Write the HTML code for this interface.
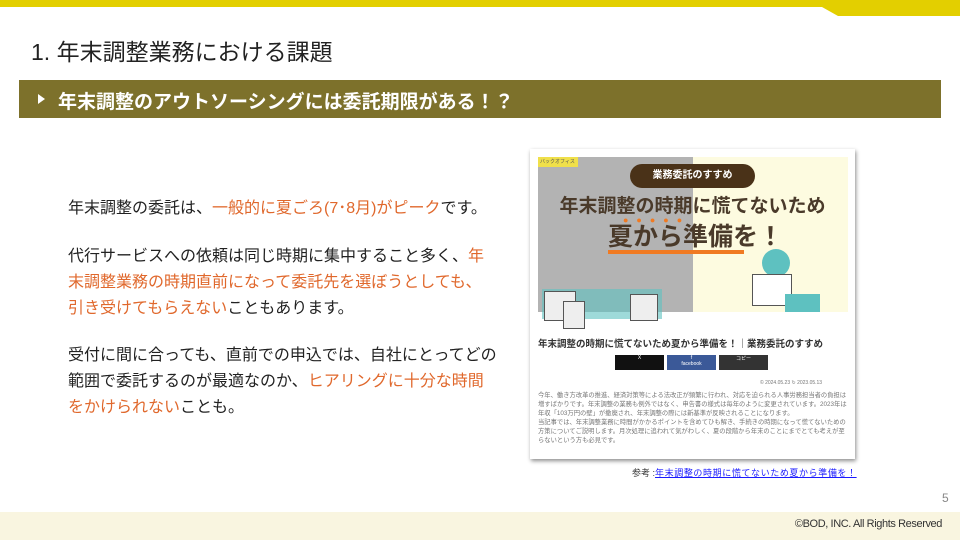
<!DOCTYPE html>
<html><head><meta charset="utf-8"><style>
*{margin:0;padding:0;box-sizing:border-box}
body{width:960px;height:540px;position:relative;background:#fff;font-family:"Liberation Sans","Noto Sans CJK JP",sans-serif;overflow:hidden;color:#222}
.abs{position:absolute}
.o{color:#e0682c}
.p{position:absolute;left:68px;font-size:16px;line-height:26px;white-space:nowrap}
</style></head><body>
<svg class="abs" style="left:0;top:0" width="960" height="17"><polygon points="0,0 960,0 960,16 838,16 822,7 0,7" fill="#e3cf00"/></svg>
<div class="abs" style="left:31px;top:33px;font-size:23px;color:#222">1. 年末調整業務における課題</div>
<div class="abs" style="left:19px;top:80px;width:922px;height:38px;background:#7d712b"></div>
<div class="abs" style="left:38px;top:94px;width:0;height:0;border-left:7px solid #fff;border-top:5px solid transparent;border-bottom:5px solid transparent"></div>
<div class="abs" style="left:58px;top:87px;font-size:19px;color:#fff;font-weight:bold">年末調整のアウトソーシングには委託期限がある！？</div>

<div class="p" style="top:196px">年末調整の委託は、<span class="o">一般的に夏ごろ(7･8月)がピーク</span>です。</div>
<div class="p" style="top:244px">代行サービスへの依頼は同じ時期に集中すること多く、<span class="o">年</span><br><span class="o">末調整業務の時期直前になって委託先を選ぼうとしても、</span><br><span class="o">引き受けてもらえない</span>こともあります。</div>
<div class="p" style="top:343px">受付に間に合っても、直前での申込では、自社にとってどの<br>範囲で委託するのが最適なのか、<span class="o">ヒアリングに十分な時間</span><br><span class="o">をかけられない</span>ことも。</div>

<div class="abs" style="left:530px;top:149px;width:325px;height:310px;background:#fff;box-shadow:1px 2px 4px rgba(0,0,0,.45);overflow:hidden">
  <div class="abs" style="left:8px;top:8px;width:155px;height:155px;background:#b3b3b3"></div>
  <div class="abs" style="left:163px;top:8px;width:155px;height:155px;background:#fdfbe0"></div>
  <div class="abs" style="left:8px;top:8px;width:40px;height:10px;background:#f0e04a;font-size:5px;line-height:10px;color:#555;padding-left:2px;white-space:nowrap;overflow:hidden">バックオフィス</div>
  <div class="abs" style="left:100px;top:15px;width:125px;height:24px;border-radius:12px;background:#4a3218;color:#fff;font-size:10px;font-weight:bold;text-align:center;line-height:24px">業務委託のすすめ</div>
  <div class="abs" style="left:0;top:42px;width:325px;text-align:center;font-size:19px;font-weight:bold;color:#4a3a2a">年末調整の時期に慌てないため</div>
  <div class="abs" style="left:93px;top:66px;font-size:9px;color:#f07a22;letter-spacing:8px">●●●●●</div>
  <div class="abs" style="left:78px;top:74px;width:136px;height:31px;font-size:25px;font-weight:bold;color:#4a3a2a;text-align:center;border-bottom:4px solid #f07a22;line-height:28px;white-space:nowrap">夏から準備を！</div>
  <div class="abs" style="left:12px;top:140px;width:120px;height:30px;background:#5ec1c0;opacity:.6"></div>
  <div class="abs" style="left:14px;top:142px;width:32px;height:30px;background:#eee;border:1px solid #555"></div>
  <div class="abs" style="left:33px;top:152px;width:22px;height:28px;background:#eee;border:1px solid #555"></div>
  <div class="abs" style="left:100px;top:145px;width:28px;height:27px;background:#eee;border:1px solid #555"></div>
  <div class="abs" style="left:232px;top:100px;width:28px;height:28px;border-radius:50%;background:#5ec1c0"></div>
  <div class="abs" style="left:222px;top:125px;width:40px;height:32px;border:1px solid #555;background:#fff"></div>
  <div class="abs" style="left:255px;top:145px;width:35px;height:18px;background:#5ec1c0"></div>
  <div class="abs" style="left:8px;top:187px;font-size:9.5px;font-weight:bold;color:#333;white-space:nowrap">年末調整の時期に慌てないため夏から準備を！｜業務委託のすすめ</div>
  <div class="abs" style="left:85px;top:206px;width:49px;height:15px;background:#111;color:#fff;font-size:5px;text-align:center">X</div>
  <div class="abs" style="left:137px;top:206px;width:49px;height:15px;background:#3b5998;color:#fff;font-size:5px;text-align:center">f<br>facebook</div>
  <div class="abs" style="left:189px;top:206px;width:49px;height:15px;background:#333;color:#fff;font-size:5px;text-align:center">コピー</div>
  <div class="abs" style="left:230px;top:231px;font-size:5px;color:#777">© 2024.05.23 ↻ 2023.05.13</div>
  <div class="abs" style="left:8px;top:242px;width:310px;font-size:6.3px;line-height:9px;color:#777">今年、働き方改革の推進、経済対策等による法改正が頻繁に行われ、対応を迫られる人事労務担当者の負担は増すばかりです。年末調整の業務も例外ではなく、申告書の様式は毎年のように変更されています。2023年は年収「103万円の壁」が撤廃され、年末調整の際には新基準が反映されることになります。<br>当記事では、年末調整業務に時間がかかるポイントを含めてひも解き、手続きの時期になって慌てないための方策についてご説明します。月次処理に追われて気がわしく、夏の段階から年末のことにまでとても考えが至らないという方も必見です。</div>
</div>
<div class="abs" style="left:632px;top:466px;font-size:9px;color:#333;white-space:nowrap">参考 :<span style="color:#1a1aff;text-decoration:underline;letter-spacing:0.6px">年末調整の時期に慌てないため夏から準備を！</span></div>

<div class="abs" style="left:942px;top:491px;font-size:12px;color:#888">5</div>
<div class="abs" style="left:0;top:512px;width:960px;height:28px;background:#f9f5e0"></div>
<div class="abs" style="left:740px;top:518px;width:202px;text-align:right;font-size:11px;color:#333;letter-spacing:-0.4px">©BOD, INC. All Rights Reserved</div>
</body></html>
